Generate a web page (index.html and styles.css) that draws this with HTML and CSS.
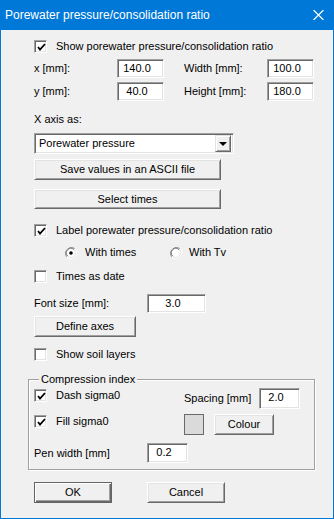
FILE: index.html
```html
<!DOCTYPE html>
<html lang="en">
<head>
    <meta charset="UTF-8">
    <meta name="viewport" content="width=device-width, initial-scale=1.0">
    <title>Porewater pressure/consolidation ratio</title>
    <link rel="stylesheet" href="styles.css">
</head>
<body>
    <div class="window">
        <div class="titlebar">
            <span class="title">Porewater pressure/consolidation ratio</span>
            <svg class="close" width="11" height="10" viewBox="0 0 11 10">
                <path d="M0.5 0 L10.5 10 M10.5 0 L0.5 10" stroke="#fff" stroke-width="1.2" fill="none"/>
            </svg>
        </div>

        <div class="content">
            <div class="row r-show">
                <span class="check on"><svg width="9" height="9" viewBox="0 0 9 9"><path d="M1 4 L3 6.5 L8 1" stroke="#000" stroke-width="1.8" fill="none"/></svg></span>
                <span class="ctext">Show porewater pressure/consolidation ratio</span>
            </div>

            <div class="row r-x">
                <span class="lab w83">x [mm]:</span>
                <span class="edit w47">140.0</span>
                <span class="lab gap20 w83">Width [mm]:</span>
                <span class="edit w47">100.0</span>
            </div>
            <div class="row r-y">
                <span class="lab w83">y [mm]:</span>
                <span class="edit w47">40.0</span>
                <span class="lab gap20 w83">Height [mm]:</span>
                <span class="edit w47">180.0</span>
            </div>

            <div class="row r-axis">X axis as:</div>

            <div class="row r-select">
                <div class="combo">
                    <span class="combo-text">Porewater pressure</span>
                    <span class="combo-btn"><span class="tri"></span></span>
                </div>
            </div>

            <div class="row r-save"><span class="btn w187">Save values in an ASCII file</span></div>
            <div class="row r-times"><span class="btn w187">Select times</span></div>

            <div class="row r-label">
                <span class="check on"><svg width="9" height="9" viewBox="0 0 9 9"><path d="M1 4 L3 6.5 L8 1" stroke="#000" stroke-width="1.8" fill="none"/></svg></span>
                <span class="ctext">Label porewater pressure/consolidation ratio</span>
            </div>

            <div class="row r-radio">
                <svg class="radio" width="12" height="12" viewBox="0 0 12 12">
                    <path d="M10.2 1.8 A6 6 0 0 0 1.8 10.2" stroke="#a0a0a0" fill="none"/>
                    <path d="M1.8 10.2 A6 6 0 0 0 10.2 1.8" stroke="#fff" fill="none"/>
                    <circle cx="6" cy="6" r="4.5" fill="#fff" stroke="#e3e3e3"/>
                    <path d="M9 2.5 A4.6 4.6 0 0 0 2.5 9" stroke="#696969" fill="none"/>
                    <circle cx="6" cy="6" r="1.8" fill="#000"/>
                </svg>
                <span class="rtext w85">With times</span>
                <svg class="radio" width="12" height="12" viewBox="0 0 12 12">
                    <path d="M10.2 1.8 A6 6 0 0 0 1.8 10.2" stroke="#a0a0a0" fill="none"/>
                    <path d="M1.8 10.2 A6 6 0 0 0 10.2 1.8" stroke="#fff" fill="none"/>
                    <circle cx="6" cy="6" r="4.5" fill="#fff" stroke="#e3e3e3"/>
                    <path d="M9 2.5 A4.6 4.6 0 0 0 2.5 9" stroke="#696969" fill="none"/>
                </svg>
                <span class="rtext tv">With Tv</span>
            </div>

            <div class="row r-date">
                <span class="check"></span>
                <span class="ctext">Times as date</span>
            </div>

            <div class="row r-font">
                <span class="lab w113">Font size [mm]:</span>
                <span class="edit w59">3.0</span>
            </div>

            <div class="row r-define"><span class="btn w102">Define axes</span></div>

            <div class="row r-soil">
                <span class="check"></span>
                <span class="ctext">Show soil layers</span>
            </div>

            <div class="group">
                <span class="legend">Compression index</span>
                <div class="row g-dash">
                    <span class="gcol">
                        <span class="check on"><svg width="9" height="9" viewBox="0 0 9 9"><path d="M1 4 L3 6.5 L8 1" stroke="#000" stroke-width="1.8" fill="none"/></svg></span>
                        <span class="ctext">Dash sigma0</span>
                    </span>
                    <span class="lab w75">Spacing [mm]</span>
                    <span class="edit w41">2.0</span>
                </div>
                <div class="row g-fill">
                    <span class="gcol">
                        <span class="check on"><svg width="9" height="9" viewBox="0 0 9 9"><path d="M1 4 L3 6.5 L8 1" stroke="#000" stroke-width="1.8" fill="none"/></svg></span>
                        <span class="ctext">Fill sigma0</span>
                    </span>
                    <span class="swatch"></span>
                    <span class="btn w60 colour">Colour</span>
                </div>
                <div class="row g-pen">
                    <span class="lab w113">Pen width [mm]</span>
                    <span class="edit w41">0.2</span>
                </div>
            </div>

            <div class="row r-ok">
                <span class="btn default w78">OK</span>
                <span class="btn w78 cancel">Cancel</span>
            </div>
        </div>
    </div>
</body>
</html>
```

FILE: styles.css
```css
* {
    box-sizing: border-box;
}
body {
    margin: 0;
    background: #f0f0f0;
    font-family: "Liberation Sans", Arial, sans-serif;
    font-size: 11px;
    color: #000;
}
.window {
    width: 334px;
    height: 519px;
    border: 1px solid #0078d7;
    border-top: none;
    background: #f0f0f0;
}
.titlebar {
    height: 30px;
    margin: 0 -1px;
    background: #0078d7;
    color: #fff;
    display: flex;
    align-items: center;
    justify-content: space-between;
    padding: 0 10px 1px 5px;
}
.title {
    font-family: "Liberation Sans", Arial, sans-serif;
    font-size: 12px;
}
.close {
    margin-top: 1px;
}
.content {
    padding-left: 33px;
}
.row {
    display: flex;
    align-items: center;
    line-height: 13px;
    white-space: nowrap;
}

/* vertical rhythm */
.r-show { margin-top: 10px; height: 13px; }
.r-x { margin-top: 6px; height: 19px; }
.r-y { margin-top: 4px; height: 19px; }
.r-axis { margin-top: 12px; height: 13px; }
.r-select { margin-top: 7px; height: 21px; }
.r-save { margin-top: 5px; height: 21px; }
.r-times { margin-top: 9px; height: 20px; }
.r-label { margin-top: 15px; height: 13px; }
.r-radio { margin-top: 9px; height: 13px; padding-left: 31px; }
.r-date { margin-top: 11px; height: 13px; }
.r-font { margin-top: 11px; height: 19px; }
.r-define { margin-top: 3px; height: 21px; }
.r-soil { margin-top: 11px; height: 13px; }
.r-ok { margin-top: 12px; height: 21px; }

.lab { display: inline-block; }
.gap20 { margin-left: 20px; }
.w41 { width: 41px; }
.w47 { width: 47px; }
.w59 { width: 59px; }
.w60 { width: 60px; }
.w75 { width: 75px; }
.w78 { width: 78px; }
.w83 { width: 83px; }
.w85 { width: 85px; }
.w102 { width: 102px; }
.w113 { width: 113px; }
.w187 { width: 187px; }

.check {
    width: 13px;
    height: 13px;
    flex: none;
    background: #fff;
    border: 1px solid;
    border-color: #a0a0a0 #fff #fff #a0a0a0;
    box-shadow: inset 1px 1px 0 #696969, inset -1px -1px 0 #e3e3e3;
    display: flex;
    align-items: center;
    justify-content: center;
}
.check svg {
    margin: 1px 0 0 1px;
}
.ctext {
    margin-left: 9px;
}

.edit {
    display: inline-block;
    height: 100%;
    background: #fff;
    border: 1px solid;
    border-color: #a0a0a0 #fff #fff #a0a0a0;
    box-shadow: inset 1px 1px 0 #696969, inset -1px -1px 0 #e3e3e3;
    text-align: center;
    padding: 0 7px 0 0;
    line-height: 17px;
}

.combo {
    width: 200px;
    height: 21px;
    background: #fff;
    border: 1px solid;
    border-color: #a0a0a0 #fff #fff #a0a0a0;
    box-shadow: inset 1px 1px 0 #696969, inset -1px -1px 0 #e3e3e3;
    display: flex;
    align-items: center;
    padding: 2px 2px 2px 4px;
}
.combo-text {
    flex: 1;
}
.combo-btn {
    width: 16px;
    height: 17px;
    background: #f0f0f0;
    border: 1px solid;
    border-color: #e3e3e3 #696969 #696969 #e3e3e3;
    box-shadow: inset 1px 1px 0 #fff, inset -1px -1px 0 #a0a0a0;
    display: flex;
    align-items: center;
    justify-content: center;
}
.tri {
    width: 0;
    height: 0;
    border-left: 4px solid transparent;
    border-right: 4px solid transparent;
    border-top: 4px solid #000;
    margin-top: 1px;
}

.btn {
    display: flex;
    align-items: center;
    justify-content: center;
    height: 100%;
    background: #f0f0f0;
    border: 1px solid;
    border-color: #fff #696969 #696969 #fff;
    box-shadow: inset 1px 1px 0 #e3e3e3, inset -1px -1px 0 #a0a0a0;
}
.btn.default {
    border-color: #646464;
    box-shadow: inset 1px 1px 0 #fff, inset -1px -1px 0 #696969, inset -2px -2px 0 #a0a0a0;
}
.cancel {
    margin-left: 35px;
}
.colour {
    margin-left: 10px;
}

.radio {
    flex: none;
}
.rtext {
    margin-left: 8px;
}
.rtext.tv {
    margin-left: 7px;
}

.group {
    position: relative;
    margin: 18px 0 0 -6px;
    width: 287px;
    height: 91px;
    border: 1px solid #a0a0a0;
    box-shadow: inset 1px 1px 0 #fff, 1px 1px 0 #fff;
    padding-left: 5px;
}
.legend {
    position: absolute;
    top: -7px;
    left: 10px;
    padding: 0 2px;
    background: #f0f0f0;
    line-height: 13px;
}
.gcol {
    width: 150px;
    display: flex;
    align-items: center;
    align-self: flex-start;
}
.g-dash { margin-top: 8px; height: 21px; }
.g-dash .gcol { margin-top: 1px; }
.g-fill { margin-top: 5px; height: 21px; }
.g-fill .gcol { margin-top: 1px; }
.g-pen { margin-top: 8px; height: 20px; }
.swatch {
    width: 20px;
    height: 21px;
    border: 1px solid #6a6a6a;
    background: #dadada;
}
```
